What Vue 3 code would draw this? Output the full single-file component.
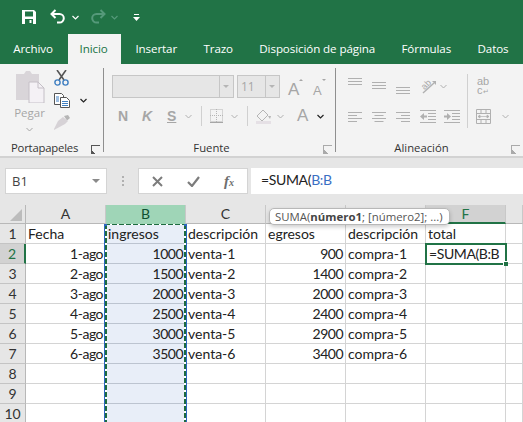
<script setup>
const tabs = ["Archivo", "Inicio", "Insertar", "Trazo", "Disposición de página", "Fórmulas", "Datos"];
const cols = ["A", "B", "C", "D", "E", "F", ""];
const rows = [
  ["Fecha", "ingresos", "descripción", "egresos", "descripción", "total"],
  ["1-ago", "1000", "venta-1", "900", "compra-1", ""],
  ["2-ago", "1500", "venta-2", "1400", "compra-2", ""],
  ["3-ago", "2000", "venta-3", "2000", "compra-3", ""],
  ["4-ago", "2500", "venta-4", "2400", "compra-4", ""],
  ["5-ago", "3000", "venta-5", "2900", "compra-5", ""],
  ["6-ago", "3500", "venta-6", "3400", "compra-6", ""],
  ["", "", "", "", "", ""],
  ["", "", "", "", "", ""],
  ["", "", "", "", "", ""],
];

function isRight(r, c) {
  return r > 0 && (c === 0 || c === 1 || c === 3);
}
</script>

<template>
  <div class="app">
    <div class="titlebar">
      <svg class="qa-save" width="16" height="16" viewBox="0 0 16 16">
        <path d="M1 1h12l2 2v12H1z" fill="#fff" />
        <rect x="4" y="2.5" width="8" height="5" fill="#217346" />
        <rect x="4" y="10" width="8" height="5" fill="#217346" />
        <rect x="8.5" y="11" width="2" height="3" fill="#fff" />
      </svg>
      <svg class="qa-undo" width="16" height="15" viewBox="0 0 16 15">
        <path d="M5.5 1 1.5 5l4 4M2 5h7.5a4.3 4.3 0 0 1 0 8.6H7" fill="none" stroke="#fff" stroke-width="2" />
      </svg>
      <svg class="qa-caret" width="7" height="5" viewBox="0 0 7 5"><path d="M.5 1 3.5 4l3-3" fill="none" stroke="#fff" stroke-width="1.2" /></svg>
      <svg class="qa-redo" width="16" height="15" viewBox="0 0 16 15">
        <path d="M10.5 1l4 4-4 4M14 5H6.5a4.3 4.3 0 0 0 0 8.6H9" fill="none" stroke="#55997a" stroke-width="2" />
      </svg>
      <svg class="qa-caret2" width="7" height="5" viewBox="0 0 7 5"><path d="M.5 1 3.5 4l3-3" fill="none" stroke="#55997a" stroke-width="1.2" /></svg>
      <svg class="qa-more" width="7" height="8" viewBox="0 0 7 8"><path d="M1 .5h5" stroke="#fff" /><path d="M0 3h7L3.5 7z" fill="#fff" /></svg>
    </div>

    <div class="tabs">
      <div v-for="t in tabs" :key="t" class="tab" :class="{ active: t === 'Inicio' }">{{ t }}</div>
    </div>

    <div class="ribbon">
      <section class="group g-clip">
        <div class="g-body clip">
          <div class="paste">
            <svg width="30" height="32" viewBox="0 0 30 32">
              <path d="M1 3h8l2-3h4l2 3h7v26H1z" fill="#d9d5d9" />
              <path d="M14 11h9l6 6v15H14z" fill="#f4f1f5" stroke="#c4bfc6" />
              <path d="M23 11v6h6" fill="none" stroke="#c4bfc6" />
            </svg>
            <span class="pegar">Pegar</span>
            <svg width="7" height="5" viewBox="0 0 7 5"><path d="M.5 1 3.5 4l3-3" fill="none" stroke="#a6a6a6" /></svg>
          </div>
          <div class="clip-tools">
            <svg width="15" height="16" viewBox="0 0 15 16">
              <path d="M3 0l7 10M12 0 5 10" stroke="#555" stroke-width="1.6" fill="none" />
              <circle cx="3.5" cy="12.5" r="2.6" fill="none" stroke="#3f7fc1" stroke-width="1.4" />
              <circle cx="11.5" cy="12.5" r="2.6" fill="none" stroke="#3f7fc1" stroke-width="1.4" />
            </svg>
            <div class="copy-row">
              <svg width="16" height="15" viewBox="0 0 16 15">
                <path d="M.5.5h7l2 2v9h-9z" fill="#fff" stroke="#555" />
                <path d="M6.5 4.5h6l3 3v7h-9z" fill="#fff" stroke="#555" />
                <path d="M8 8.5h6M8 10.5h6M8 12.5h6M2 4h3M2 6h3M2 8h3" stroke="#3f7fc1" />
              </svg>
              <svg width="7" height="5" viewBox="0 0 7 5"><path d="M.5 1 3.5 4l3-3" fill="none" stroke="#222" stroke-width="1.2" /></svg>
            </div>
            <svg width="16" height="15" viewBox="0 0 16 15">
              <path d="M10 1l4-1 2 3-3 2.500z" fill="#b5b5b5" />
              <path d="M9 2l5 4-3 3L0 15v-1l4-8z" fill="#d6d2d6" />
            </svg>
          </div>
        </div>
        <div class="g-label">Portapapeles<i class="launcher dark"></i></div>
      </section>

      <section class="group g-font">
        <div class="g-body font">
          <div class="font-top">
            <div class="combo name"><span></span><b class="drop"></b></div>
            <div class="combo size"><span>11</span><b class="drop"></b></div>
            <span class="big-a">A<em></em></span>
            <span class="small-a">A<em></em></span>
          </div>
          <div class="font-bottom">
            <span class="fmt n">N</span>
            <span class="fmt k">K</span>
            <span class="fmt s">S</span>
            <svg class="cr-s" width="7" height="5" viewBox="0 0 7 5"><path d="M.5 1 3.500 4l3-3" fill="none" stroke="#b0b0b0" /></svg>
            <i class="vsep"></i>
            <svg width="13" height="14" viewBox="0 0 13 14">
              <path d="M.5.500h12v12H.5zM6.500 0v13M0 6.500h13" fill="none" stroke="#b5b5b5" stroke-dasharray="1 1" />
              <path d="M0 13.500h13" stroke="#a6a6a6" />
            </svg>
            <svg class="cr-b" width="7" height="5" viewBox="0 0 7 5"><path d="M.5 1 3.500 4l3-3" fill="none" stroke="#b0b0b0" /></svg>
            <i class="vsep"></i>
            <svg width="16" height="15" viewBox="0 0 16 15">
              <path d="M7 1 1 7l5 5 6-6z" fill="none" stroke="#b5b5b5" />
              <path d="M12 7l2 3 1-3z" fill="#b5b5b5" />
              <rect y="12" width="15" height="3" fill="#e5e0e5" />
            </svg>
            <svg class="cr-f" width="7" height="5" viewBox="0 0 7 5"><path d="M.5 1 3.500 4l3-3" fill="none" stroke="#b0b0b0" /></svg>
            <span class="color-a">A</span>
            <svg width="7" height="5" viewBox="0 0 7 5"><path d="M.5 1 3.500 4l3-3" fill="none" stroke="#222" stroke-width="1.2" /></svg>
          </div>
        </div>
        <div class="g-label">Fuente<i class="launcher"></i></div>
      </section>

      <section class="group g-align">
        <div class="g-body align">
          <div class="align-grid">
            <svg width="14" height="20" viewBox="0 0 14 20"><path d="M0 4.500h14M0 7.500h14M0 10.500h14" stroke="#b0b0b0" /></svg>
            <svg width="14" height="20" viewBox="0 0 14 20"><path d="M0 8.500h14M0 11.500h14M0 14.500h14" stroke="#b0b0b0" /></svg>
            <svg width="14" height="20" viewBox="0 0 14 20"><path d="M0 13.500h14M0 16.500h14M0 19.500h14" stroke="#b0b0b0" /></svg>
            <div class="orient">
              <svg width="17" height="16" viewBox="0 0 17 16">
                <text x="2" y="10" transform="rotate(-45 6 8)" font-family="Liberation Sans, sans-serif" font-size="9" fill="#a8a8a8">ab</text>
                <path d="M3 15 14 5" stroke="#b0b0b0" stroke-width="1.400" />
                <path d="M12 3h4v4z" fill="#b0b0b0" />
              </svg>
              <svg width="7" height="5" viewBox="0 0 7 5"><path d="M.5 1 3.500 4l3-3" fill="none" stroke="#b0b0b0" /></svg>
            </div>
            <i></i>
            <svg width="14" height="12" viewBox="0 0 14 12"><path d="M0 .500h14M0 3.500h9M0 6.500h14M0 9.500h9" stroke="#b0b0b0" /></svg>
            <svg width="14" height="12" viewBox="0 0 14 12"><path d="M0 .500h14M2.500 3.500h9M0 6.500h14M2.500 9.500h9" stroke="#b0b0b0" /></svg>
            <svg width="14" height="12" viewBox="0 0 14 12"><path d="M0 .500h14M5 3.500h9M0 6.500h14M5 9.500h9" stroke="#b0b0b0" /></svg>
            <svg class="dent" width="16" height="13" viewBox="0 0 16 13"><path d="M0 .500h16M8 3.500h8M8 6.500h8M8 9.500h8M0 12.500h16" stroke="#b0b0b0" /><path d="M0 6.500 4 3v7zM4 5.500h3v2H4z" fill="#b0b0b0" /></svg>
            <svg class="dent" width="16" height="13" viewBox="0 0 16 13"><path d="M0 .500h16M8 3.500h8M8 6.500h8M8 9.500h8M0 12.500h16" stroke="#b0b0b0" /><path d="M7 6.500 3 3v7zM0 5.500h3v2H0z" fill="#b0b0b0" /></svg>
          </div>
          <i class="vsep tall"></i>
          <div class="wrap-col">
            <span class="wrap-text">ab<br />c<small>↵</small></span>
            <div class="merge">
              <svg width="15" height="15" viewBox="0 0 15 15">
                <path d="M.5.500h14v14H.5zM0 4.500h15M0 10.500h15M5 .500v4M10 .500v4M5 10.500v4M10 10.500v4" fill="none" stroke="#b0b0b0" />
                <path d="M2 7.500h11M2 7.500l2-1.500v3zM13 7.500l-2-1.500v3z" fill="#b0b0b0" stroke="#b0b0b0" stroke-width=".7" />
              </svg>
              <svg width="7" height="5" viewBox="0 0 7 5"><path d="M.5 1 3.500 4l3-3" fill="none" stroke="#b0b0b0" /></svg>
            </div>
          </div>
        </div>
        <div class="g-label">Alineación<i class="launcher"></i></div>
      </section>
    </div>

    <div class="formula-bar">
      <div class="name-box"><span>B1</span><b class="tri"></b></div>
      <div class="dots"><i></i><i></i><i></i></div>
      <div class="fx-box">
        <svg width="11" height="11" viewBox="0 0 11 11"><path d="M1 1l9 9M10 1 1 10" stroke="#7c7c7c" stroke-width="2" /></svg>
        <svg width="13" height="11" viewBox="0 0 13 11"><path d="M1 6l4 4 7-9" fill="none" stroke="#7c7c7c" stroke-width="2.200" /></svg>
        <span class="fx">f<small>x</small></span>
      </div>
      <div class="formula-input">=SUMA(<span class="ref">B:B</span></div>
    </div>

    <div class="sheet">
      <div class="grid">
        <div class="corner"><b></b></div>
        <div v-for="(c, i) in cols" :key="i" class="col-h" :class="{ 'col-sel': c === 'B', 'col-cur': c === 'F' }">{{ c }}</div>

        <template v-for="(row, r) in rows" :key="r">
          <div class="row-h" :class="{ 'row-cur': r === 1 }">{{ r + 1 }}</div>
          <div
            v-for="(val, c) in row"
            :key="c"
            class="cell"
            :class="{ right: isRight(r, c), sel: c === 1 }"
          >{{ val }}</div>
          <div class="cell"></div>
        </template>
      </div>

      <div class="grid overlay">
        <div class="ants"></div>
        <div class="cursor"><span>=SUMA(B:B</span><b class="handle"></b></div>
      </div>
      <div class="tooltip">SUMA(<b>número1</b>; [número2]; ...)</div>
    </div>
  </div>
</template>

<style scoped>
.app {
  width: 523px;
  height: 422px;
  overflow: hidden;
  background: #e6e6e6;
  font-family: "Open Sans", "Noto Sans", sans-serif;
  color: #333;
}

/* title bar */
.titlebar {
  height: 34px;
  background: #217346;
  display: flex;
  align-items: center;
}
.qa-save { margin: -1px 0 0 21px; }
.qa-undo { margin: -1px 0 0 13px; }
.qa-caret { margin: 1px 0 0 6px; }
.qa-redo { margin: -1px 0 0 11px; }
.qa-caret2 { margin: 1px 0 0 5px; }
.qa-more { margin: 1px 0 0 15px; }

/* tabs */
.tabs {
  height: 30px;
  background: #217346;
  display: flex;
}
.tab {
  color: #fff;
  font-size: 11.600px;
  line-height: 30px;
  padding: 0 13.200px;
  letter-spacing: -.1px;
  white-space: nowrap;
}
.tab.active {
  background: #f3f3f3;
  color: #217346;
  padding: 0 13.500px 0 12px;
  margin: 0 1px 0 1.500px;
}

/* ribbon */
.ribbon {
  height: 92px;
  background: #f3f3f3;
  border-bottom: 2px solid #d2d2d2;
  display: flex;
}
.group {
  display: flex;
  flex-direction: column;
  border-right: 1px solid #8f8f8f;
  margin-top: 4px;
  height: 84px;
}
.g-clip { width: 103px; }
.g-font { width: 231px; }
.g-align { flex: 1; border-right: 0; }
.g-body { flex: 1; display: flex; }
.g-label {
  height: 14px;
  line-height: 20px;
  font-size: 11.300px;
  color: #333;
  text-align: center;
  position: relative;
  padding-right: 16px;
}
.g-clip .g-label { text-align: left; padding-left: 11px; letter-spacing: -.2px; }
.launcher {
  position: absolute;
  right: 3px;
  top: 7px;
  width: 8px;
  height: 8px;
  border-left: 1px solid #aaa;
  border-top: 1px solid #aaa;
  background: linear-gradient(45deg, #aaa 0 25%, transparent 25%);
}
.launcher.dark {
  border-color: #555;
  background: linear-gradient(45deg, #555 0 25%, transparent 25%);
}

.clip { padding-left: 14px; gap: 9px; }
.paste {
  display: flex;
  flex-direction: column;
  align-items: center;
  width: 31px;
  padding-top: 3px;
}
.pegar {
  font-size: 11.500px;
  color: #a6a6a6;
  line-height: 16px;
  margin-top: 2px;
}
.paste svg:last-child { margin-top: 6px; }
.clip-tools {
  display: flex;
  flex-direction: column;
  gap: 7px;
  padding-top: 2px;
}
.copy-row { display: flex; align-items: center; gap: 10px; }

.font { flex-direction: column; padding: 7px 0 0 8px; }
.font-top { display: flex; align-items: flex-start; }
.combo {
  height: 23px;
  display: flex;
  background: #e6e6e6;
  border: 1px solid #c6c6c6;
  box-sizing: border-box;
  color: #a6a6a6;
}
.combo span { flex: 1; padding-left: 3px; line-height: 21px; font-size: 12px; }
.combo .drop {
  width: 13px;
  border-left: 1px solid #c6c6c6;
  position: relative;
}
.combo .drop::after {
  content: "";
  position: absolute;
  left: 3px;
  top: 9px;
  border: 3px solid transparent;
  border-top-color: #b5b5b5;
}
.combo.name { width: 122px; }
.combo.size { width: 43px; margin-left: 3px; }
.big-a, .small-a {
  position: relative;
  color: #a6a6a6;
  font-family: "Liberation Sans", sans-serif;
  line-height: 23px;
}
.big-a { font-size: 17px; margin-left: 8px; width: 25px; margin-top: 3px; }
.small-a { font-size: 13px; width: 20px; margin-top: 4px; }
.big-a em, .small-a em {
  position: absolute;
  border: 2.500px solid transparent;
}
.big-a em { top: -1px; left: 11px; border-bottom-color: #a6a6a6; }
.small-a em { top: 0; left: 9px; border-top-color: #a6a6a6; }

.font-bottom {
  display: flex;
  align-items: center;
  height: 22px;
  margin-top: 3px;
  padding-left: 6px;
}
.fmt {
  font-family: "Liberation Sans", sans-serif;
  font-weight: 700;
  font-size: 14px;
  color: #a6a6a6;
  width: 24px;
}
.fmt.k { font-style: italic; width: 25px; }
.fmt.s { text-decoration: underline; width: 17px; }
.cr-s { margin: 0 9px 0 1px; }
.cr-b { margin: 0 9px 0 8px; }
.cr-f { margin: 0 0 0 5px; }
.vsep {
  width: 1px;
  height: 20px;
  background: #d0d0d0;
  margin-right: 8px;
  flex: none;
}
.color-a {
  font-family: "Liberation Sans", sans-serif;
  font-size: 17px;
  color: #a6a6a6;
  margin: 0 9px 0 13px;
}

.align { padding: 6px 0 0 12px; }
.align-grid {
  display: grid;
  grid-template-columns: repeat(5, 24px);
  grid-template-rows: 30px 20px;
  row-gap: 8px;
  width: 119px;
  align-items: start;
}
.dent { margin-top: -2px; }
.orient { display: flex; align-items: center; gap: 3px; margin-top: 4px; }
.orient svg { overflow: visible; }
.vsep.tall { height: 54px; margin: 0; }
.wrap-col {
  display: flex;
  flex-direction: column;
  padding-left: 8px;
  gap: 10px;
}
.wrap-text {
  font-family: "Liberation Sans", sans-serif;
  font-size: 11px;
  line-height: 9px;
  height: 22px;
  color: #a6a6a6;
  padding: 3px 0 0 1px;
}
.wrap-text small { font-size: 7px; }
.merge { display: flex; align-items: center; gap: 11px; }

/* formula bar */
.formula-bar {
  height: 47px;
  box-sizing: border-box;
  padding: 10px 0 11px 5px;
  display: flex;
}
.name-box {
  width: 102px;
  background: #fff;
  border: 1px solid #d4d4d4;
  box-sizing: border-box;
  display: flex;
  align-items: center;
  justify-content: space-between;
  padding: 0 6px;
  font-size: 13px;
  color: #444;
}
.tri {
  border: 4px solid transparent;
  border-top-color: #8a8a8a;
  border-bottom: 0;
}
.dots {
  width: 31px;
  display: flex;
  flex-direction: column;
  align-items: center;
  justify-content: center;
  gap: 2px;
}
.dots i { width: 2px; height: 2px; background: #b0b0b0; }
.fx-box {
  width: 110px;
  background: #fff;
  border: 1px solid #d4d4d4;
  box-sizing: border-box;
  display: flex;
  align-items: center;
  gap: 24px;
  padding-left: 13px;
}
.fx {
  font-family: "Liberation Serif", serif;
  font-style: italic;
  font-size: 15px;
  font-weight: 700;
  color: #6e6e6e;
}
.fx small { font-size: 10px; }
.formula-input {
  flex: 1;
  margin-left: 3px;
  background: #fff;
  padding-left: 10px;
  font-family: Lato, sans-serif;
  font-size: 14px;
  line-height: 24px;
  letter-spacing: -.35px;
  color: #222;
}
.ref { color: #3a6fc4; }

/* sheet */
.sheet {
  position: relative;
  font-family: Lato, sans-serif;
  font-size: 14px;
  color: #222;
}
.grid {
  display: grid;
  grid-template-columns: 26px repeat(6, 80px) 1fr;
  grid-template-rows: 19px repeat(10, 20px);
  background: #fff;
}
.overlay {
  position: absolute;
  inset: 0;
  background: none;
  pointer-events: none;
}
.corner {
  background: #e6e6e6;
  border-right: 1px solid #b8b8b8;
  border-bottom: 1px solid #b8b8b8;
  box-sizing: border-box;
  position: relative;
}
.corner b {
  position: absolute;
  right: 3px;
  bottom: 2px;
  border-left: 12px solid transparent;
  border-bottom: 12px solid #bcbcbc;
}
.col-h {
  background: #e6e6e6;
  border-right: 1px solid #c8c8c8;
  border-bottom: 1px solid #b8b8b8;
  box-sizing: border-box;
  text-align: center;
  line-height: 18px;
  color: #333;
}
.col-h.col-sel {
  background: #9fd5b7;
  color: #0f5132;
  border-bottom-color: #9fd5b7;
}
.col-h.col-cur {
  background: #d2d2d2;
  color: #217346;
  border-bottom: 2px solid #217346;
}
.row-h {
  background: #e6e6e6;
  border-right: 1px solid #b8b8b8;
  border-bottom: 1px solid #c4c4c4;
  box-sizing: border-box;
  text-align: center;
  line-height: 20px;
  color: #333;
}
.row-h.row-cur {
  background: #d2d2d2;
  color: #217346;
  border-right: 2px solid #217346;
}
.cell {
  border-right: 1px solid #d4d4d4;
  border-bottom: 1px solid #d4d4d4;
  box-sizing: border-box;
  line-height: 19px;
  padding: 0 2px;
  white-space: nowrap;
  overflow: hidden;
}
.cell.right { text-align: right; letter-spacing: -.5px; }
.cell.sel {
  background: #e8eef8;
  border-bottom-color: #bcc4d0;
}
.ants {
  grid-column: 3;
  grid-row: 2 / span 10;
  margin: 0 -1px 0 -2px;
  border-left: 1px solid #2b66c0;
  border-right: 1px solid #2b66c0;
  background:
    linear-gradient(#2b66c0, #2b66c0) 0 0 / 2px 2px no-repeat,
    linear-gradient(#2b66c0, #2b66c0) 100% 0 / 2px 2px no-repeat,
    repeating-linear-gradient(to bottom, #1d6b3f 0 5px, #fff 5px 7px) 0 0 / 2px 100% no-repeat,
    repeating-linear-gradient(to bottom, #1d6b3f 0 5px, #fff 5px 7px) 100% 0 / 2px 100% no-repeat,
    repeating-linear-gradient(to right, #1d6b3f 0 5px, #fff 5px 7px) 0 0 / 100% 1px no-repeat;
}
.cursor {
  grid-column: 7;
  grid-row: 3;
  margin: -1px;
  border: 2px solid #217346;
  position: relative;
  line-height: 17px;
  padding-left: 2px;
  background: #fff;
  white-space: nowrap;
  letter-spacing: -.4px;
}
.handle {
  position: absolute;
  right: -3px;
  bottom: -3px;
  width: 4px;
  height: 4px;
  background: #217346;
  border: 1px solid #fff;
  border-width: 1px 0 0 1px;
}
.tooltip {
  position: absolute;
  left: 269px;
  top: 3px;
  width: 181px;
  height: 17px;
  box-sizing: border-box;
  background: #fff;
  border: 1px solid #b8b8b8;
  border-radius: 5px;
  box-shadow: 0 2px 4px rgba(0, 0, 0, .2);
  font-family: "Open Sans", sans-serif;
  font-size: 11.400px;
  line-height: 15px;
  padding-left: 5px;
  color: #555;
  white-space: nowrap;
}
.tooltip b { color: #444; }
</style>

<style>
html, body { margin: 0; background: #e6e6e6; }
</style>
